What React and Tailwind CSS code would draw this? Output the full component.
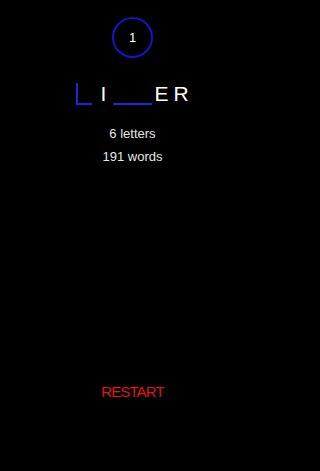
export default function App() {
  const cells = [
    { ch: "", line: true, cursor: true },
    { ch: "I" },
    { ch: "", line: true },
    { ch: "", line: true },
    { ch: "E" },
    { ch: "R" },
  ];

  return (
    <div className="bg-black min-h-[471px]">
      <div
        className="h-[471px] w-[265px] bg-black flex flex-col items-center"
        style={{ fontFamily: '"Liberation Sans", Arial, sans-serif' }}
      >
        {/* level badge */}
        <div className="mt-[17px] w-[41px] h-[41px] rounded-full border-2 border-[#1414c8] flex items-center justify-center">
          <span className="text-white text-[13px] leading-none">1</span>
        </div>

        {/* word slots */}
        <div className="mt-[25.75px] flex">
          {cells.map((c, i) => (
            <div key={i} className="relative w-[19.4px] flex flex-col items-center">
              <span className="h-[19px] leading-[20px] text-[21px] text-white">{c.ch}</span>
              <div
                className={
                  c.line
                    ? c.cursor
                      ? "h-[2px] w-[16px] bg-[#2424d4]"
                      : "h-[2px] w-full bg-[#2424d4]"
                    : "h-[2px] w-full"
                }
              />
              {c.cursor && (
                <div className="absolute left-[1.7px] top-[-0.5px] bottom-0 w-[2px] bg-[#2424d4]" />
              )}
            </div>
          ))}
        </div>

        <div className="mt-[18.4px] flex flex-col items-center text-[13px] leading-[22.7px] text-[#e6e6e6]">
          <p>6 letters</p>
          <p>191 words</p>
        </div>

        <button className="mt-auto mb-[69px] text-[15px] leading-[20px] tracking-[-0.9px] text-[#e0141b]">
          RESTART
        </button>
      </div>
    </div>
  );
}
